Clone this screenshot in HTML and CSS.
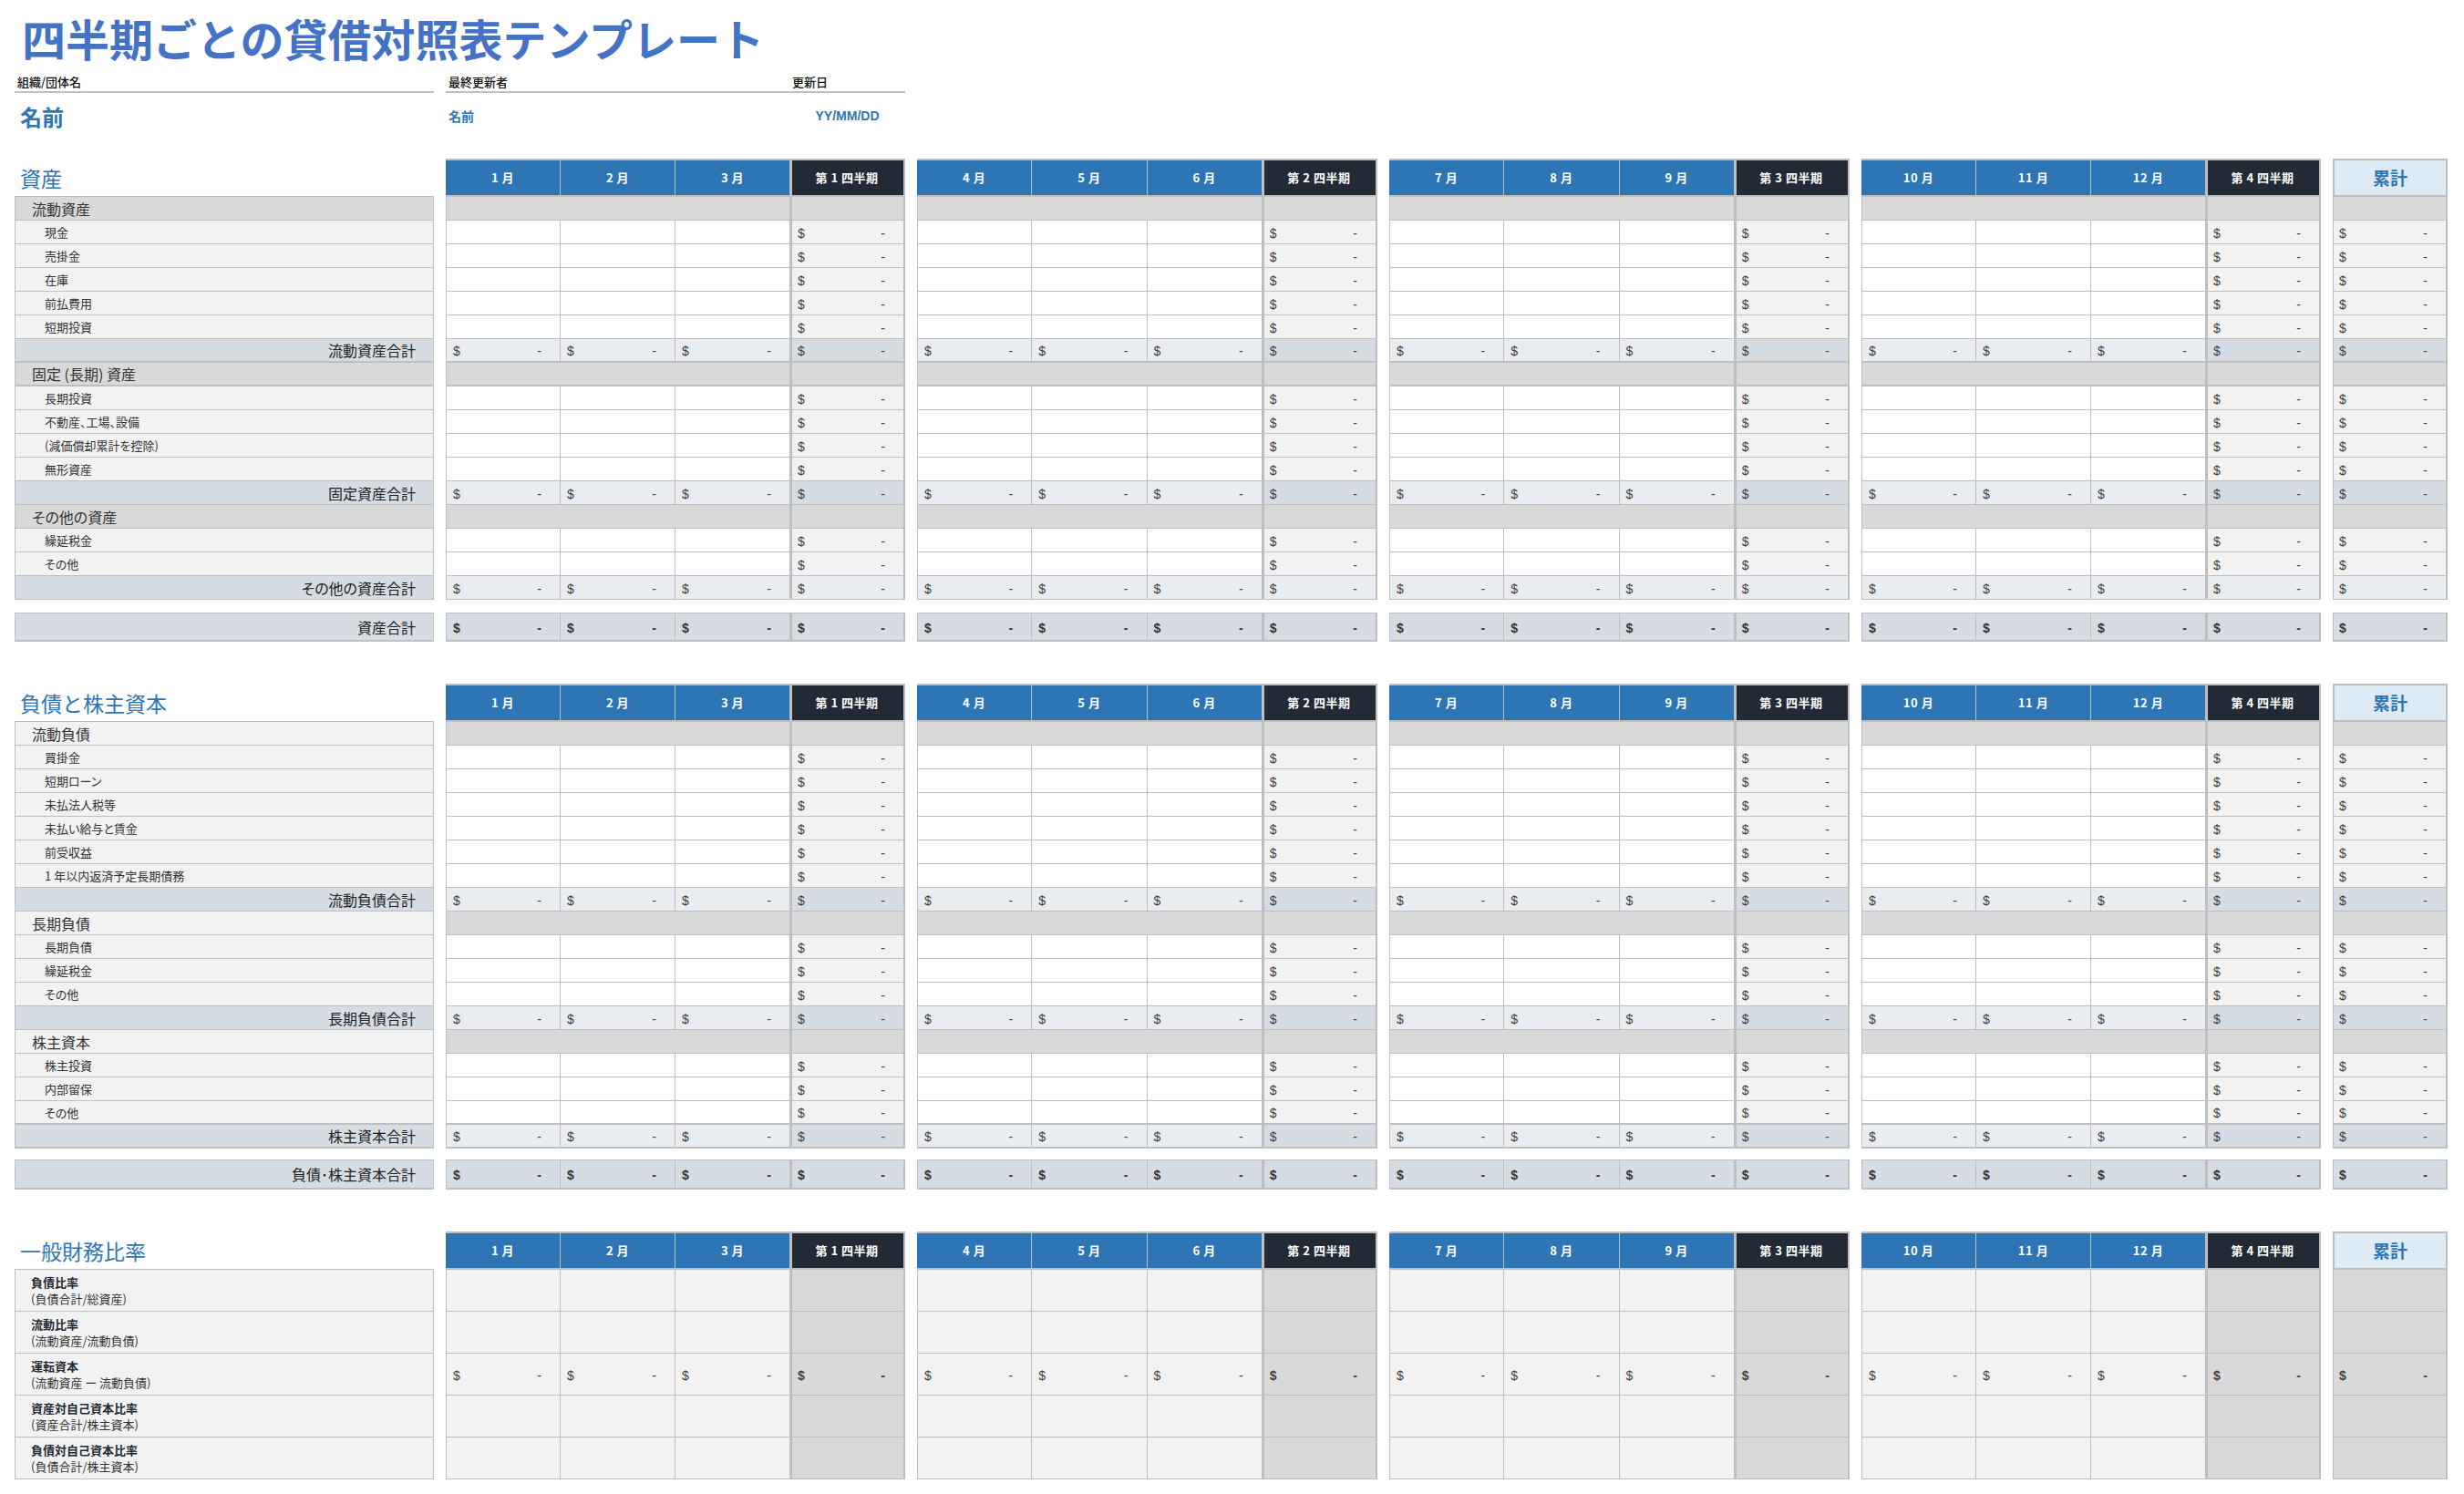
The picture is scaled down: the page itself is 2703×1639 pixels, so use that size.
FILE: index.html
```html
<!DOCTYPE html>
<html lang="ja">
<head>
<meta charset="utf-8">
<title>四半期ごとの貸借対照表テンプレート</title>
<link rel="stylesheet" href="styles.css">
</head>
<body>
<main class="page">
  <h1 class="title">四半期ごとの貸借対照表テンプレート</h1>
  <div class="meta">
    <div class="meta-org">
      <div class="meta-label">組織/団体名</div>
      <div class="org-name">名前</div>
    </div>
    <div class="meta-info">
      <div class="meta-cell">
        <div class="meta-label">最終更新者</div>
        <div class="meta-value">名前</div>
      </div>
      <div class="meta-cell">
        <div class="meta-label">更新日</div>
        <div class="meta-value meta-date">YY/MM/DD</div>
      </div>
    </div>
  </div>
  <div id="sheet"></div>
</main>
<script src="app.js"></script>
</body>
</html>
```
FILE: styles.css
```css
* { box-sizing: border-box; }
html, body { margin: 0; background: #fff; }
body { font-family: "Noto Sans CJK JP", "Liberation Sans", sans-serif; color: #333; }
.page { width: 2703px; padding-left: 16px; }

.title { margin: 0; height: 76px; padding: 11px 0 0 8px; font-size: 48px; line-height: 60px; font-weight: 700; color: #4472c4; white-space: nowrap; }

.meta, .sec { display: grid; grid-template-columns: 460px 504px 505px 505px 504px 126px; column-gap: 13px; }
.meta { height: 98px; }
.meta-info { display: grid; grid-template-columns: 377px 127px; }
.meta-label { height: 26px; padding: 2px 0 0 3px; font-size: 13px; line-height: 24px; font-weight: 500; color: #111; border-bottom: 2px solid #bfbfbf; }
.org-name { padding: 8px 0 0 6px; font-size: 24px; line-height: 36px; font-weight: 700; color: #2e75b6; }
.meta-value { padding: 13px 0 0 3px; font-size: 14px; line-height: 24px; font-weight: 700; color: #2e75b6; }
.meta-date { padding-left: 0; text-align: center; font-family: "Liberation Sans", sans-serif; }

.sec { margin-bottom: 46px; }
.col { display: flex; flex-direction: column; }

.sec-title { height: 42px; padding: 2px 0 0 6px; font-size: 23px; line-height: 38px; font-weight: 400; color: #2e75b6; white-space: nowrap; border-bottom: 1px solid #bfbfbf; }

.r { height: 26px; display: grid; grid-template-columns: repeat(4, 1fr); }
.r-head { height: 42px; }
.r-gap { height: 14px; }
.r-gap-s { height: 12px; }
.r-total { height: 32px; }
.r-total-t { height: 33px; }
.r-ratio { height: 46px; }
.col-single .r { grid-template-columns: 1fr; }

.lab { height: 26px; display: flex; align-items: center; border: 1px solid #bfbfbf; border-top: 0; background: #f2f2f2; white-space: nowrap; font-feature-settings: "palt"; }
.lab-group { padding-left: 18px; font-size: 16px; background: #d9d9d9; color: #333; }
.lab-group-light { padding-left: 18px; font-size: 16px; color: #333; }
.lab-item { padding-left: 32px; font-size: 13px; color: #333; }
.lab-sub { justify-content: flex-end; padding-right: 19px; font-size: 16px; background: #d6dce4; color: #222; }
.lab-total { height: 32px; justify-content: flex-end; padding-right: 19px; font-size: 16px; background: #d6dce4; color: #222; border-top: 1px solid #bfbfbf; border-bottom-width: 2px; }
.lab-total-t { height: 33px; }
.lab-ratio { height: 46px; flex-direction: column; align-items: flex-start; justify-content: center; padding-left: 17px; font-size: 13px; line-height: 18px; }
.lab-ratio b { color: #222b35; font-weight: 700; }
.gap-cell { height: 14px; }
.gap-cell-s { height: 12px; }

.c { display: flex; justify-content: space-between; align-items: center; padding: 2px 20px 0 7px; font: 14px "Liberation Sans", sans-serif; color: #404040; border-right: 1px solid #bfbfbf; border-bottom: 1px solid #bfbfbf; background: #fff; }
.c:first-child { border-left: 1px solid #bfbfbf; }
.c-q { border-left: 2px solid #bfbfbf; border-right: 2px solid #bfbfbf; background: #f2f2f2; padding-left: 6px; }
.c-group { grid-column: span 3; background: #d9d9d9; }
.c-q-group { background: #d9d9d9; }
.c-sub { background: #e9ecf1; }
.c-q-sub { background: #d6dce4; }
.c-q-sub-light { background: #e9ecf1; }
.c-total { background: #d6dce4; font-weight: 700; border-top: 1px solid #bfbfbf; border-bottom-width: 2px; color: #333; }
.c-ratio { background: #f2f2f2; }
.c-q-ratio { background: #d9d9d9; }
.c-strong { font-weight: 700; }
.r-thick .c, .lab-thick { border-bottom-width: 2px; }

.h { display: flex; align-items: center; justify-content: center; padding-bottom: 2px; font-size: 13px; font-weight: 700; color: #fff; white-space: pre; border-top: 2px solid #bfbfbf; border-bottom: 2px solid #bfbfbf; border-right: 1px solid #bfbfbf; background: #2e75b6; letter-spacing: .5px; }
.h-q { background: #222b35; border-left: 2px solid #bfbfbf; border-right: 2px solid #bfbfbf; padding-right: 2px; }
.h-sum { font-size: 19px; color: #2e75b6; background: #ddebf7; border-left: 2px solid #bfbfbf; border-right: 2px solid #bfbfbf; letter-spacing: 0; }
```
FILE: app.js
```js
(function () {
  var sheet = document.getElementById('sheet');
  var sections = [
    { title: '資産', groupClass: 'lab-group', gap: 'r-gap', totalCls: 'r-total', rows: [
      ['g', '流動資産'], ['i', '現金'], ['i', '売掛金'], ['i', '在庫'], ['i', '前払費用'], ['i', '短期投資'], ['s', '流動資産合計', 1],
      ['g', '固定 (長期) 資産', 1], ['i', '長期投資'], ['i', '不動産、工場、設備'], ['i', '(減価償却累計を控除)'], ['i', '無形資産'], ['s', '固定資産合計'],
      ['g', 'その他の資産'], ['i', '繰延税金'], ['i', 'その他'], ['sl', 'その他の資産合計'],
      ['t', '資産合計']
    ]},
    { title: '負債と株主資本', groupClass: 'lab-group-light', gap: 'r-gap-s', totalCls: 'r-total-t', rows: [
      ['g', '流動負債'], ['i', '買掛金'], ['i', '短期ローン'], ['i', '未払法人税等'], ['i', '未払い給与と賃金'], ['i', '前受収益'], ['i', '1 年以内返済予定長期債務'], ['s', '流動負債合計'],
      ['g', '長期負債'], ['i', '長期負債'], ['i', '繰延税金'], ['i', 'その他'], ['s', '長期負債合計'],
      ['g', '株主資本'], ['i', '株主投資'], ['i', '内部留保'], ['i', 'その他', 1], ['s', '株主資本合計', 1],
      ['t', '負債･株主資本合計']
    ]},
    { title: '一般財務比率', ratio: true, rows: [
      ['r', '負債比率', '(負債合計/総資産)'], ['r', '流動比率', '(流動資産/流動負債)'], ['rv', '運転資本', '(流動資産 ー 流動負債)'],
      ['r', '資産対自己資本比率', '(資産合計/株主資本)'], ['r', '負債対自己資本比率', '(負債合計/株主資本)']
    ]}
  ];
  var quarters = [[1, 2, 3], [4, 5, 6], [7, 8, 9], [10, 11, 12]];

  function el(cls, text) {
    var d = document.createElement('div');
    d.className = cls;
    if (text !== undefined) d.textContent = text;
    return d;
  }
  function money(cls) {
    var d = el('c ' + cls);
    d.appendChild(el('cur', '$'));
    d.appendChild(el('val', '-'));
    return d;
  }
  function plain(cls) { return el('c ' + cls); }

  function labelCol(sec) {
    var col = el('col');
    col.appendChild(el('sec-title', sec.title));
    sec.rows.forEach(function (row) {
      var k = row[0], thick = row[2] === 1 && k !== 'r' ? ' lab-thick' : '';
      if (k === 'g') col.appendChild(el('lab ' + sec.groupClass + thick, row[1]));
      if (k === 'i') col.appendChild(el('lab lab-item' + thick, row[1]));
      if (k === 's' || k === 'sl') col.appendChild(el('lab lab-sub' + thick, row[1]));
      if (k === 't') {
        col.appendChild(el(sec.gap === 'r-gap' ? 'gap-cell' : 'gap-cell-s'));
        col.appendChild(el('lab lab-total' + (sec.totalCls === 'r-total-t' ? ' lab-total-t' : ''), row[1]));
      }
      if (k === 'r' || k === 'rv') {
        var d = el('lab lab-ratio');
        d.appendChild(Object.assign(document.createElement('b'), { textContent: row[1] }));
        d.appendChild(Object.assign(document.createElement('span'), { textContent: row[2] }));
        col.appendChild(d);
      }
    });
    return col;
  }

  function blockRow(sec, row, months) {
    var k = row[0], wrap = el('r' + (row[2] === 1 && k !== 'r' && k !== 'rv' ? ' r-thick' : ''));
    var n = months;
    function q(fn, cls) { wrap.appendChild(fn('c-q ' + cls)); }
    function each(fn, cls) { for (var i = 0; i < n; i++) wrap.appendChild(fn(cls)); }
    if (k === 'g') { if (n) wrap.appendChild(plain('c-group')); q(plain, 'c-q-group'); }
    if (k === 'i') { each(plain, ''); q(money, ''); }
    if (k === 's') { each(money, 'c-sub'); q(money, 'c-q-sub'); }
    if (k === 'sl') { each(money, 'c-sub'); q(money, 'c-q-sub-light'); }
    if (k === 't') { wrap.classList.add(sec.totalCls); each(money, 'c-total'); q(money, 'c-total'); }
    if (k === 'r') { wrap.classList.add('r-ratio'); each(plain, 'c-ratio'); q(plain, 'c-q-ratio'); }
    if (k === 'rv') { wrap.classList.add('r-ratio'); each(money, 'c-ratio'); q(money, 'c-q-ratio c-strong'); }
    return wrap;
  }

  function dataCol(sec, qIndex) {
    var col = el('col' + (qIndex < 0 ? ' col-single' : ''));
    var head = el('r r-head');
    if (qIndex < 0) {
      head.appendChild(el('h h-sum', '累計'));
    } else {
      quarters[qIndex].forEach(function (m) { head.appendChild(el('h', m + ' 月')); });
      head.appendChild(el('h h-q', '第 ' + (qIndex + 1) + ' 四半期'));
    }
    col.appendChild(head);
    sec.rows.forEach(function (row) {
      if (row[0] === 't') col.appendChild(el(sec.gap));
      col.appendChild(blockRow(sec, row, qIndex < 0 ? 0 : 3));
    });
    return col;
  }

  sections.forEach(function (sec) {
    var s = el('sec');
    s.appendChild(labelCol(sec));
    [0, 1, 2, 3, -1].forEach(function (q) { s.appendChild(dataCol(sec, q)); });
    sheet.appendChild(s);
  });
})();
```
